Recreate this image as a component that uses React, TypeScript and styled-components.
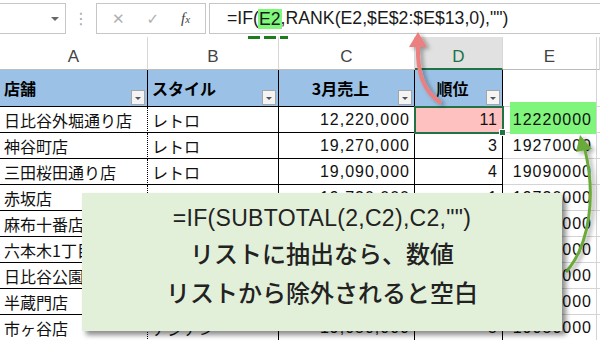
import React from 'react';
import styled, { createGlobalStyle, css } from 'styled-components';

/* ---------------------------------------------------------------------- */

type Align = 'left' | 'right' | 'center';

const rows = [
  ['日比谷外堀通り店', 'レトロ', '12,220,000', '11', '12220000'],
  ['神谷町店', 'レトロ', '19,270,000', '3', '19270000'],
  ['三田桜田通り店', 'レトロ', '19,090,000', '4', '19090000'],
  ['赤坂店', 'レトロ', '19,730,000', '1', '19730000'],
  ['麻布十番店', 'モダン', '19,410,000', '2', '19410000'],
  ['六本木1丁目店', 'モダン', '18,800,000', '6', '18800000'],
  ['日比谷公園店', 'モダン', '18,450,000', '8', '18450000'],
  ['半蔵門店', 'アジアン', '18,630,000', '7', '18630000'],
  ['市ヶ谷店', 'アジアン', '19,050,000', '5', '19050000'],
];

const headers: { label: string; align: Align }[] = [
  { label: '店舗', align: 'left' },
  { label: 'スタイル', align: 'left' },
  { label: '3月売上', align: 'center' },
  { label: '順位', align: 'center' },
];

export default function App() {
  return (
    <Page>
      <GlobalStyle />

      <FormulaBar>
        <NameBox>
          <Caret />
        </NameBox>
        <Grip>⋮</Grip>
        <ButtonBox>
          <BarIcon>✕</BarIcon>
          <BarIcon>✓</BarIcon>
          <Fx>
            f<sub>x</sub>
          </Fx>
        </ButtonBox>
        <FormulaInput>
          <span>=IF(</span>
          <RefMark>E2</RefMark>
          <span>,RANK(E2,$E$2:$E$13,0),"")</span>
        </FormulaInput>
      </FormulaBar>

      <Row $height={33}>
        {['A', 'B', 'C', 'D', 'E'].map((c) => (
          <ColHead key={c} $selected={c === 'D'}>
            {c}
          </ColHead>
        ))}
        <ColHead />
      </Row>

      <Row $height={37}>
        {headers.map((h) => (
          <HeadCell key={h.label} $align={h.align}>
            {h.label}
            <FilterButton />
          </HeadCell>
        ))}
        <Cell $plain />
        <Cell $plain />
      </Row>

      {rows.map((r, i) => (
        <Row key={r[0]} $height={26}>
          <Cell $dotted>{r[0]}</Cell>
          <Cell>{r[1]}</Cell>
          <Cell $align="right" $num>
            {r[2]}
          </Cell>
          <Cell $align="right" $num $active={i === 0}>
            {r[3]}
            {i === 0 && <FillHandle />}
          </Cell>
          <Cell $align="right" $num $plain>
            {i === 0 && <Marker />}
            <CellText>{r[4]}</CellText>
          </Cell>
          <Cell $plain />
        </Row>
      ))}

      <Arrows width="600" height="340" viewBox="0 0 600 340">
        <defs>
          <filter id="sh" x="-50%" y="-50%" width="200%" height="200%">
            <feDropShadow dx="3" dy="2" stdDeviation="2" floodColor="#000" floodOpacity="0.35" />
          </filter>
        </defs>
        <g filter="url(#sh)">
          <path d="M441 103 C424 92 417 74 418 45" fill="none" stroke="#ec8080" strokeWidth="4" />
          <polygon points="418,32 427,47 409,47" fill="#ec8080" />
        </g>
        <g filter="url(#sh)">
          <path d="M566 272 C590 245 596 195 585 150" fill="none" stroke="#6aaa3a" strokeWidth="3" />
          <polygon points="580,135 592,149 576,152" fill="#6aaa3a" />
        </g>
      </Arrows>

      <Callout>
        <FormulaLine>=IF(SUBTOTAL(2,C2),C2,"")</FormulaLine>
        <NoteLine $height={34}>リストに抽出なら、数値</NoteLine>
        <NoteLine $height={44}>リストから除外されると空白</NoteLine>
      </Callout>
    </Page>
  );
}

/* ---------------------------------------------------------------------- */

const GlobalStyle = createGlobalStyle`
  html, body {
    margin: 0;
    padding: 0;
    background: #fff;
  }
  * {
    box-sizing: border-box;
  }
`;

const Page = styled.div`
  position: relative;
  width: 600px;
  height: 340px;
  overflow: hidden;
  background: #fff;
  font-family: 'Noto Sans CJK JP', sans-serif;
  color: #111;
`;

const FormulaBar = styled.div`
  display: flex;
  align-items: stretch;
  height: 37px;
  padding: 3px 0 3px 0;
`;

const Framed = css`
  border: 1px solid #c6c6c6;
  background: #fff;
  height: 31px;
`;

const NameBox = styled.div`
  ${Framed};
  width: 67px;
  margin-left: -1px;
  display: flex;
  align-items: center;
  justify-content: flex-end;
  padding-right: 6px;
`;

const Caret = styled.span`
  width: 0;
  height: 0;
  border-left: 4px solid transparent;
  border-right: 4px solid transparent;
  border-top: 4px solid #666;
`;

const Grip = styled.div`
  width: 30px;
  display: flex;
  align-items: center;
  justify-content: center;
  color: #a8a8a8;
  font-family: 'DejaVu Sans', sans-serif;
  font-size: 16px;
`;

const ButtonBox = styled.div`
  ${Framed};
  width: 110px;
  display: flex;
  align-items: center;
  justify-content: space-around;
  padding: 0 4px;
`;

const BarIcon = styled.span`
  color: #b0b0b0;
  font-family: 'DejaVu Sans', sans-serif;
  font-size: 15px;
`;

const Fx = styled.span`
  font-family: 'Liberation Serif', serif;
  font-style: italic;
  font-size: 15px;
  color: #444;
  sub {
    font-size: 11px;
    vertical-align: 0;
  }
`;

const FormulaInput = styled.div`
  ${Framed};
  flex: 1;
  margin-left: 3px;
  margin-right: -6px;
  display: flex;
  align-items: center;
  padding-left: 17px;
  font-family: 'Liberation Sans', Arial, sans-serif;
  font-size: 17.7px;
  color: #1a1a1a;
  white-space: nowrap;
`;

const RefMark = styled.span`
  position: relative;
  background: #7ff77a;
  padding: 0 1px;
  margin: 0 -1px;
  line-height: 20px;
  &::after {
    content: '';
    position: absolute;
    left: -10px;
    right: -6px;
    bottom: -10px;
    height: 3px;
    background: repeating-linear-gradient(
      to right,
      #1e7b1e 0 12px,
      transparent 12px 16px
    );
  }
`;

const Row = styled.div<{ $height: number }>`
  display: grid;
  grid-template-columns: 148px 131px 136px 88px 94px 1fr;
  height: ${(p) => p.$height}px;
`;

const ColHead = styled.div<{ $selected?: boolean }>`
  display: flex;
  align-items: center;
  justify-content: center;
  font-family: 'Liberation Sans', Arial, sans-serif;
  font-size: 17px;
  color: ${(p) => (p.$selected ? '#217346' : '#444')};
  background: ${(p) => (p.$selected ? '#e1e1e1' : '#fff')};
  border-right: 1px solid #d8d8d8;
  border-bottom: ${(p) => (p.$selected ? '2px solid #217346' : '1px solid #bcbcbc')};
  padding-top: 8px;
`;

const HeadCell = styled.div<{ $align: Align }>`
  position: relative;
  display: flex;
  align-items: center;
  justify-content: ${(p) => (p.$align === 'center' ? 'center' : 'flex-start')};
  padding: ${(p) => (p.$align === 'center' ? '0 12px 0 0' : '0 0 0 4px')};
  background: #9bc2e6;
  border-right: 1px solid #000;
  border-bottom: 1px solid #000;
  font-size: 16px;
  font-weight: 700;
  color: #000;
`;

const FilterButton = styled.span`
  position: absolute;
  right: 2px;
  bottom: 1px;
  width: 14px;
  height: 15px;
  border: 1px solid #a6a6a6;
  background: #f4f4f4;
  &::after {
    content: '';
    position: absolute;
    left: 3px;
    top: 6px;
    border-left: 3.5px solid transparent;
    border-right: 3.5px solid transparent;
    border-top: 3.5px solid #555;
  }
`;

const Cell = styled.div<{
  $align?: Align;
  $num?: boolean;
  $plain?: boolean;
  $dotted?: boolean;
  $active?: boolean;
}>`
  position: relative;
  display: flex;
  align-items: center;
  justify-content: ${(p) => (p.$align === 'right' ? 'flex-end' : 'flex-start')};
  padding: 0 4px;
  white-space: nowrap;
  font-size: 16px;
  color: #111;
  border-right: ${(p) =>
    p.$plain ? '1px solid #d4d4d4' : p.$dotted ? '1px dotted #000' : '1px solid #000'};
  border-bottom: 1px solid ${(p) => (p.$plain ? '#d4d4d4' : '#000')};
  ${(p) =>
    p.$num &&
    css`
      font-family: 'Liberation Sans', Arial, sans-serif;
      letter-spacing: 1px;
    `}
  ${(p) =>
    p.$active &&
    css`
      background: #ffc0c0;
      outline: 2px solid #217346;
      outline-offset: -1px;
      z-index: 1;
    `}
`;

const FillHandle = styled.span`
  position: absolute;
  right: -4px;
  bottom: -4px;
  width: 7px;
  height: 7px;
  background: #217346;
  border: 1px solid #fff;
`;

const Marker = styled.span`
  position: absolute;
  left: 7px;
  right: 0;
  top: -5px;
  bottom: -2px;
  background: #80f57b;
`;

const CellText = styled.span`
  position: relative;
`;

const Arrows = styled.svg`
  position: absolute;
  left: 0;
  top: 0;
  pointer-events: none;
  z-index: 2;
`;

const Callout = styled.div`
  position: absolute;
  left: 82px;
  top: 193px;
  width: 480px;
  height: 138px;
  z-index: 3;
  background: #e2f0d9;
  box-shadow: 4px 4px 5px rgba(0, 0, 0, 0.45);
  display: flex;
  flex-direction: column;
  align-items: center;
  padding-top: 7px;
  color: #222;
`;

const FormulaLine = styled.div`
  height: 36px;
  line-height: 36px;
  font-family: 'Liberation Sans', Arial, sans-serif;
  font-size: 23px;
  letter-spacing: 0.3px;
`;

const NoteLine = styled.div<{ $height: number }>`
  height: ${(p) => p.$height}px;
  line-height: ${(p) => p.$height}px;
  font-size: 24px;
  font-weight: 500;
`;
